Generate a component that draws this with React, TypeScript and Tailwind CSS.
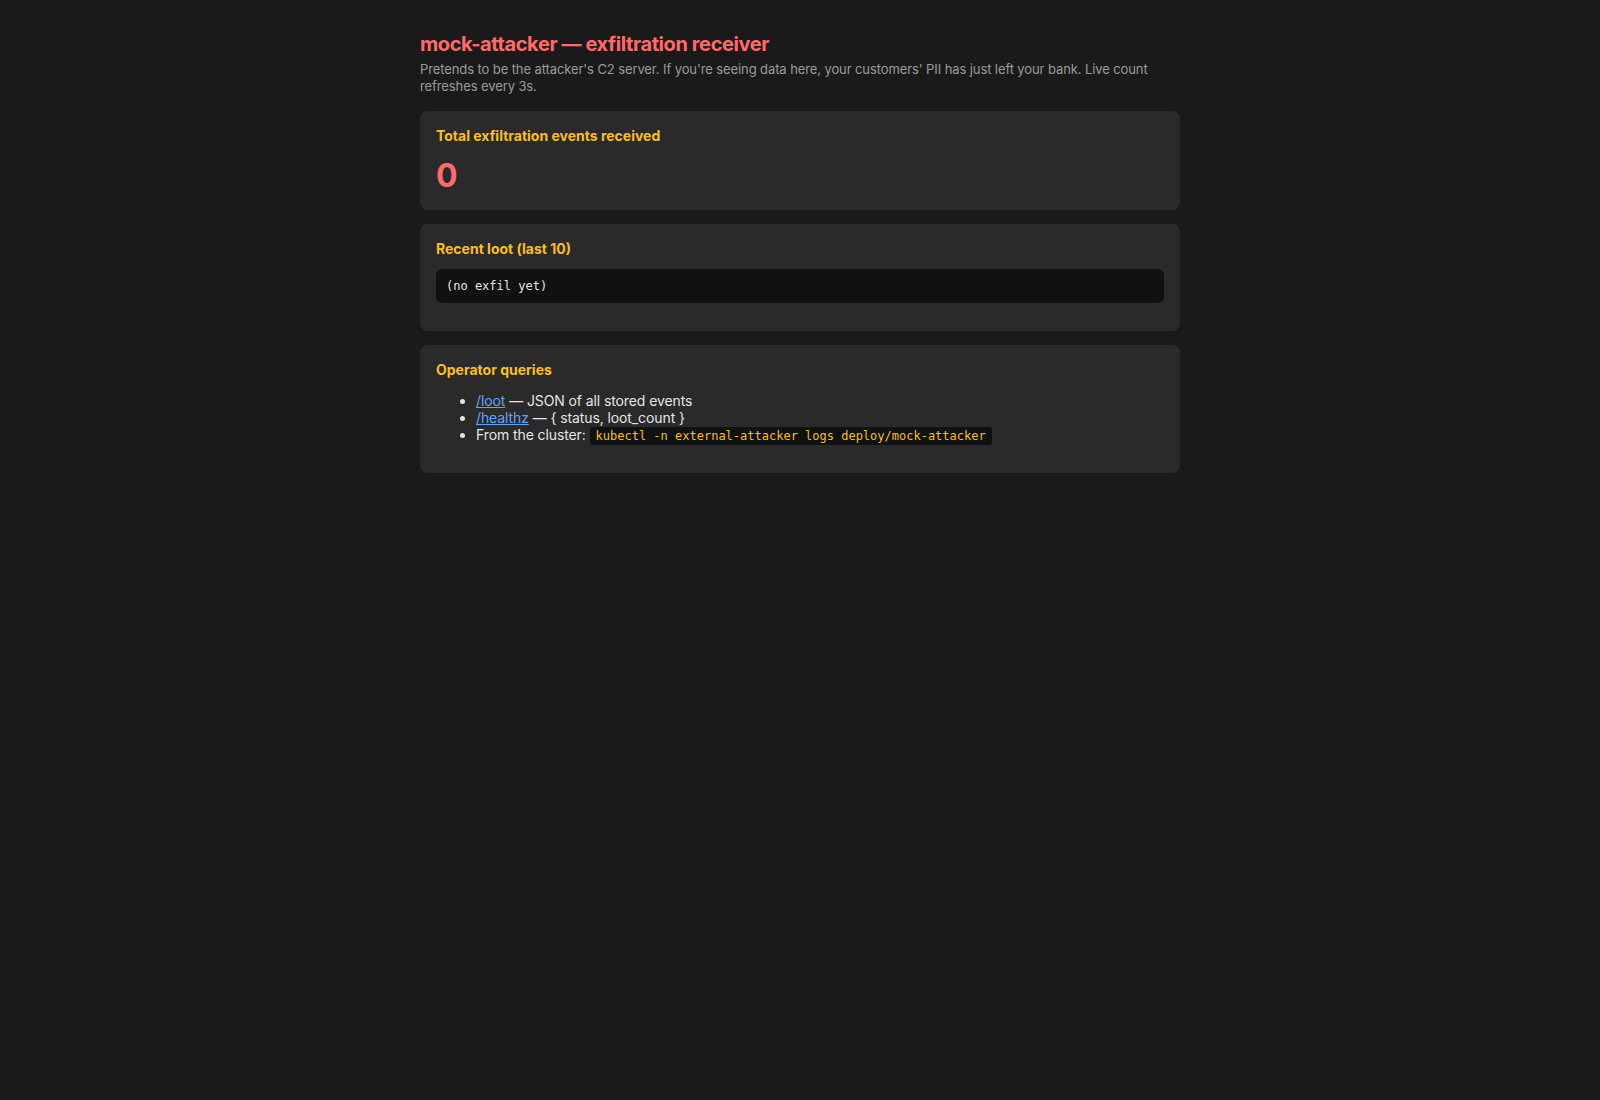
export default function App() {
  const font = { fontFamily: "Inter, 'Noto Sans', sans-serif" };
  const mono = { fontFamily: "'DejaVu Sans Mono', 'Liberation Mono', monospace" };
  return (
    <div className="min-h-screen bg-[#1a1a1a] text-[#e5e5e5] pt-8 px-4" style={font}>
      <div className="max-w-[760px] mx-auto">
        <h1 className="text-[20px] leading-[24px] font-bold text-[#ff6b6b] tracking-[-0.4px]">
          mock-attacker — exfiltration receiver
        </h1>
        <p className="mt-[5px] text-[13px] leading-[17px] text-[#9a9a9a] tracking-[-0.1px]">
          Pretends to be the attacker's C2 server. If you're seeing data here, your customers' PII has just left your
          bank. Live count refreshes every 3s.
        </p>

        <div className="mt-[16px] bg-[#2a2a2a] rounded-lg p-4">
          <h2 className="text-[14px] leading-[17px] font-bold text-[#fbbf24]">Total exfiltration events received</h2>
          <div className="mt-[14px] text-[32px] leading-[36px] font-bold text-[#ff6b6b]">0</div>
        </div>

        <div className="mt-[14px] bg-[#2a2a2a] rounded-lg p-4">
          <h2 className="text-[14px] leading-[17px] font-bold text-[#fbbf24]">Recent loot (last 10)</h2>
          <pre
            className="mt-3 mb-3 bg-[#111111] rounded-md px-[10px] py-[10px] text-[12px] leading-[14px] text-[#e5e5e5]"
            style={mono}
          >
            (no exfil yet)
          </pre>
        </div>

        <div className="mt-[14px] bg-[#2a2a2a] rounded-lg p-4">
          <h2 className="text-[14px] leading-[17px] font-bold text-[#fbbf24]">Operator queries</h2>
          <ul className="list-disc pl-10 my-[14px] text-[14px] leading-[17px] text-[#e5e5e5] tracking-[-0.1px]">
            <li>
              <a href="#" className="text-[#60a5fa] underline">/loot</a> — JSON of all stored events
            </li>
            <li>
              <a href="#" className="text-[#60a5fa] underline">/healthz</a> — {"{ status, loot_count }"}
            </li>
            <li>
              From the cluster:{" "}
              <code
                className="bg-[#111111] text-[#fbbf24] text-[12px] leading-[14px] px-[6px] py-[2px] rounded-[3px] tracking-normal"
                style={mono}
              >
                kubectl -n external-attacker logs deploy/mock-attacker
              </code>
            </li>
          </ul>
        </div>
      </div>
    </div>
  );
}
